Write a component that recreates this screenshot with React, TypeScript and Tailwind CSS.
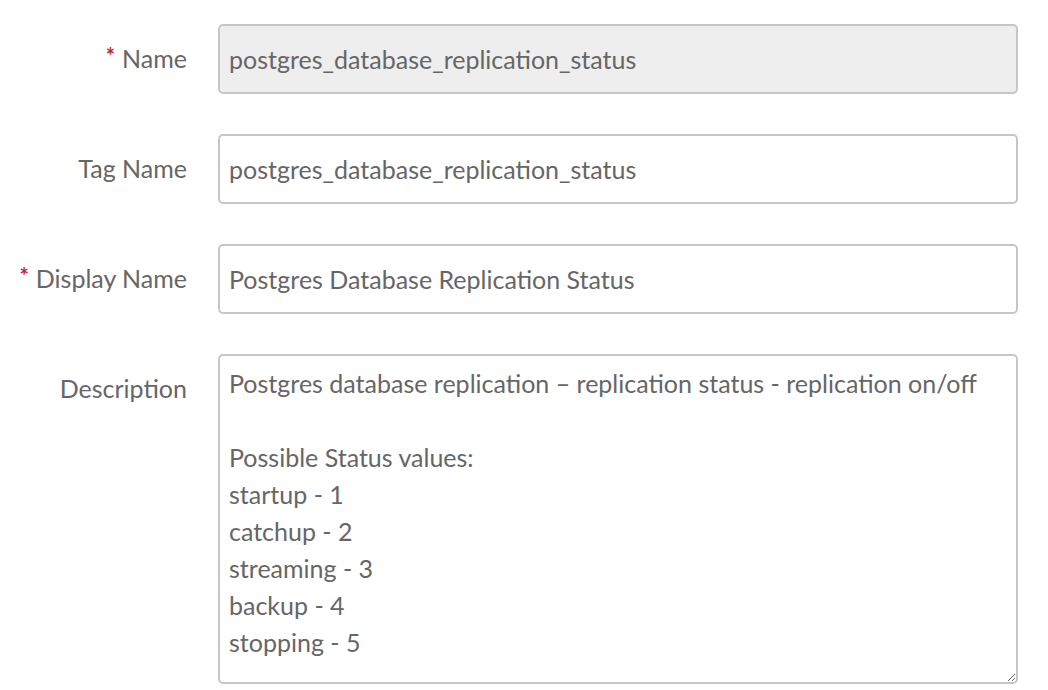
import React from "react";

const fontCls = "font-['Lato','Noto_Sans',sans-serif]";

function Label({ text, required }: { text: string; required?: boolean }) {
  return (
    <div className="flex h-[70px] items-center justify-end text-[25px] text-[#666]">
      {required && <span className="mr-[7px] -mt-[8px] text-[22px] font-bold text-[#c0282d]">*</span>}
      <span>{text}</span>
    </div>
  );
}

const inputCls =
  "h-[70px] w-[800px] rounded-[5px] border-2 border-[#c6c6c6] px-[9px] text-[25px] text-[#666] outline-none font-['Lato','Noto_Sans',sans-serif]";

export default function App() {
  const desc =
    "Postgres database replication – replication status - replication on/off\n\nPossible Status values:\nstartup - 1\ncatchup - 2\nstreaming - 3\nbackup - 4\nstopping - 5";
  return (
    <div className={`h-[690px] w-[1048px] overflow-hidden bg-white ${fontCls}`}>
      <div className="grid grid-cols-[187px_800px] gap-x-[31px] gap-y-[40px] pt-[24px]">
        <Label text="Name" required />
        <input readOnly disabled value="postgres_database_replication_status" className={`${inputCls} bg-[#eeeeee]`} />
        <Label text="Tag Name" />
        <input readOnly value="postgres_database_replication_status" className={`${inputCls} bg-white`} />
        <Label text="Display Name" required />
        <input readOnly value="Postgres Database Replication Status" className={`${inputCls} bg-white`} />
        <div className="self-start">
          <Label text="Description" />
        </div>
        <textarea
          readOnly
          value={desc}
          className="h-[330px] w-[800px] resize rounded-[5px] border-2 border-[#c6c6c6] bg-white px-[9px] pt-[9px] pb-[8px] font-['Lato','Noto_Sans',sans-serif] text-[25px] leading-[37px] text-[#666] outline-none"
        />
      </div>
    </div>
  );
}
